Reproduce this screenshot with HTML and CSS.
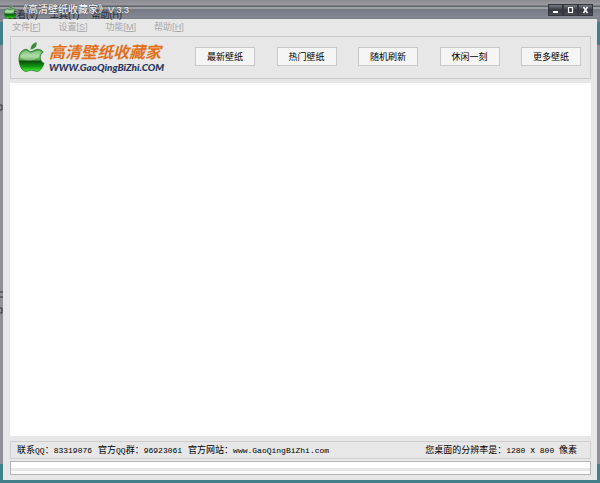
FILE: index.html
```html
<!DOCTYPE html>
<html lang="zh-CN">
<head>
    <meta charset="UTF-8">
    <meta name="viewport" content="width=device-width, initial-scale=1.0">
    <title>《高清壁纸收藏家》V 3.3</title>
    <link rel="stylesheet" href="styles.css">
</head>
<body>

    <!-- Apple icon, used in the title bar and the logo -->
    <svg class="defs" width="0" height="0">
        <defs>
            <linearGradient id="green" x1="0" y1="0" x2="0" y2="1">
                <stop offset="0" stop-color="#3c9a38"/>
                <stop offset="0.3" stop-color="#8fcf86"/>
                <stop offset="0.48" stop-color="#4fa044"/>
                <stop offset="0.54" stop-color="#0b4f0e"/>
                <stop offset="0.78" stop-color="#12980f"/>
                <stop offset="1" stop-color="#4cf03a"/>
            </linearGradient>
            <symbol id="apple" viewBox="0 0 28 32">
                <path d="M12.500 8.500C13 4 16 .8 19.500 .5C20.500 4.500 17.500 8.500 12.500 8.500Z" fill="#3d8a3b" stroke="#e8fbe4" stroke-width=".5"/>
                <path d="M13 10.500C15.500 10.500 17 8 20.500 8C23 8 25 9.200 26.200 11C21.500 13.500 22.500 20.500 27 22.500C26 26 23 31 20 31C17.500 31 16.500 29.800 14 29.800C11.500 29.800 10.500 31 8 31C4.500 31 1 24.500 1 18.500C1 11.500 4.800 8 8.500 8C10.500 8 11.800 10.500 13 10.500Z" fill="url(#green)" stroke="#176b17" stroke-width=".7"/>
                <path d="M2.800 17C3.500 11.500 6 9.500 8.500 9.500C10.500 9.500 11.500 12 13.500 12C16 12 18 9.500 20.500 9.500C22 9.500 23 10 24 10.800C21.500 13 21.500 15 21.700 16C15 21 8 20 2.800 17Z" fill="#fff" opacity=".3"/>
            </symbol>
        </defs>
    </svg>

    <!-- Desktop menu showing through the title bar -->
    <div class="desktop-menu" aria-hidden="true">
        <span>查看(V)</span>
        <span>工具(T)</span>
        <span>帮助(H)</span>
    </div>

    <!-- Bits of desktop labels left of the window -->
    <svg class="desktop-edge" viewBox="0 0 3 220" aria-hidden="true">
        <path d="M0 5H2V10H0M0 192H3M0 197H3M0 208H2V213H0" fill="none" stroke="#34353f"/>
    </svg>

    <div class="window">
        <header class="titlebar">
            <svg class="app-icon"><use href="#apple"/></svg>
            <h1>《高清壁纸收藏家》<small>V 3.3</small></h1>
            <div class="window-buttons">
                <button type="button" aria-label="最小化"><svg viewBox="0 0 13 10"><path d="M4 7H9" stroke="#fff" stroke-width="2"/></svg></button>
                <button type="button" aria-label="最大化"><svg viewBox="0 0 13 10"><path d="M4.500 3V7.500H8.500V3M4 2.500H9" fill="none" stroke="#fff" stroke-width="1.200"/></svg></button>
                <button type="button" aria-label="关闭"><svg viewBox="0 0 13 10"><path d="M4.500 2L8.500 8M8.500 2L4.500 8" stroke="#fff" stroke-width="1.500"/></svg></button>
            </div>
        </header>

        <nav class="menu">
            <a href="#">文件[<u>F</u>]</a>
            <a href="#">设置[<u>S</u>]</a>
            <a href="#">功能[<u>M</u>]</a>
            <a href="#">帮助[<u>H</u>]</a>
        </nav>

        <div class="toolbar">
            <div class="logo">
                <svg class="logo-icon"><use href="#apple"/></svg>
                <div class="logo-text">
                    <p class="logo-name">高清壁纸收藏家</p>
                    <p class="logo-url">WWW.GaoQingBiZhi.COM</p>
                </div>
            </div>
            <div class="actions">
                <button type="button">最新壁纸</button>
                <button type="button">热门壁纸</button>
                <button type="button">随机刷新</button>
                <button type="button">休闲一刻</button>
                <button type="button">更多壁纸</button>
            </div>
        </div>

        <main class="view"></main>

        <footer class="status">
            <span>联系<code>QQ</code>：<code>83319076</code></span>
            <span>官方<code>QQ</code>群：<code>96923061</code></span>
            <span>官方网站：<code>www.GaoQingBiZhi.com</code></span>
            <span class="resolution">您桌面的分辨率是：<code>1280 X 800 </code>像素</span>
        </footer>

        <div class="progress"></div>
    </div>

</body>
</html>
```

FILE: styles.css
```css
* {
    box-sizing: border-box;
}

body {
    margin: 0;
    height: 100vh;
    padding: 0 3px 3px;
    font-family: "Liberation Sans", "Noto Sans CJK SC", sans-serif;
    font-size: 9px;
    color: #000;
    background: linear-gradient(#85868f 22px, #41808a 22px, #41808a 45px, #8f8e99 45px, #8f8e99 464px, #41808a 464px);
}

h1, p {
    margin: 0;
}

button {
    padding: 0;
    font-family: inherit;
    font-size: inherit;
}

.defs {
    position: absolute;
}

.desktop-menu {
    position: absolute;
    left: 8px;
    top: 10px;
    display: flex;
    gap: 12px;
    height: 10px;
    overflow: hidden;
    line-height: 10px;
    color: #24262c;
}

.desktop-edge {
    position: absolute;
    left: 0;
    top: 100px;
    width: 3px;
    height: 220px;
}

.window {
    display: flex;
    flex-direction: column;
    height: 100%;
    padding: 0 6px 5px 7px;
    background: #e7e7e7;
}

.titlebar {
    display: flex;
    align-items: center;
    gap: 1px;
    height: 19px;
    margin: 0 -9px 0 -10px;
    padding: 0 7px 0 3px;
    background: linear-gradient(#8a8b91 0, #9a999f 5px, #5f6268 6px, #5f6268 7px, #9da0a4 7px, #9da0a4 9px, #757985 9px, #858994 18px, #6e727c 19px);
}

.app-icon {
    position: relative;
    width: 14px;
    height: 14px;
    margin-top: 4px;
}

.titlebar h1 {
    position: relative;
    flex: 1;
    font-size: 10px;
    font-weight: normal;
    line-height: 18px;
    color: #fff;
    text-shadow: 0 0 2px #444;
}

.titlebar small {
    font-size: 9px;
}

.window-buttons {
    display: flex;
}

.window-buttons button {
    width: 15px;
    height: 12px;
    border: 1px solid #34363d;
    background: linear-gradient(#777a84, #33363f 50%, #484b55);
}

.window-buttons svg {
    display: block;
    width: 100%;
    height: 100%;
}

.menu {
    display: flex;
    gap: 18px;
    padding-left: 2px;
    height: 17px;
    line-height: 16px;
}

.menu a {
    color: #a9a9a9;
    text-decoration: none;
}

.toolbar {
    display: flex;
    align-items: center;
    height: 43px;
    margin-bottom: 4px;
    padding: 0 9px 2px 7px;
    border: 1px solid #c9c9c9;
}

.logo {
    display: flex;
    gap: 4px;
}

.logo-icon {
    width: 27px;
    height: 32px;
}

.logo-text {
    width: 112px;
    font-family: Lato, "Noto Sans CJK SC", sans-serif;
    font-weight: bold;
    font-style: italic;
    white-space: nowrap;
}

.logo-name {
    font-size: 16px;
    line-height: 21px;
    color: #e2701a;
}

.logo-url {
    font-weight: 900;
    font-size: 10px;
    line-height: 11px;
    color: #26355e;
}

.actions {
    display: flex;
    flex: 1;
    justify-content: space-between;
    margin-left: 34px;
}

.actions button {
    width: 60px;
    height: 19px;
    border: 1px solid #c8c8c8;
    background: #f5f5f5;
}

.view {
    flex: 1;
    background: #fff;
}

.status {
    display: flex;
    gap: 6px;
    align-items: center;
    height: 18px;
    margin: 5px 0 2px;
    padding: 0 13px 2px 6px;
    border: 1px solid #cfcfcf;
    white-space: nowrap;
}

.status code {
    font-family: "Liberation Mono", monospace;
    font-size: 8px;
    white-space: pre;
}

.resolution {
    margin-left: auto;
}

.progress {
    height: 14px;
    border: 1px solid #b5b5b5;
    background: linear-gradient(#fff 6px, #e6e6e6 6px, #e6e6e6 9px, #fafafa 9px);
}
```
